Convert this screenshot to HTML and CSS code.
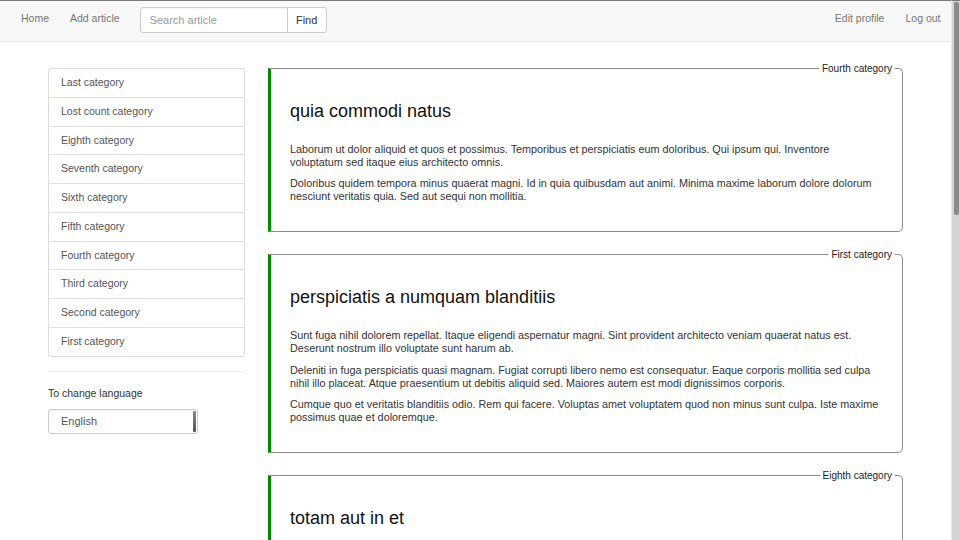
FILE: index.html
```html
<!DOCTYPE html>
<html lang="en">
<head>
<meta charset="utf-8">
<title>Articles</title>
<link rel="stylesheet" href="styles.css">
</head>
<body>
<nav class="navbar">
  <div class="nav-left">
    <a class="nav-link" href="#">Home</a>
    <a class="nav-link" href="#">Add article</a>
    <form class="search">
      <input class="search-input" type="text" placeholder="Search article">
      <button class="search-btn" type="button">Find</button>
    </form>
  </div>
  <div class="nav-right">
    <a class="nav-link" href="#">Edit profile</a>
    <a class="nav-link" href="#">Log out</a>
  </div>
</nav>
<div class="page">
  <aside class="sidebar">
    <ul class="list">
      <li class="list-item">Last category</li>
      <li class="list-item">Lost count category</li>
      <li class="list-item">Eighth category</li>
      <li class="list-item">Seventh category</li>
      <li class="list-item">Sixth category</li>
      <li class="list-item">Fifth category</li>
      <li class="list-item">Fourth category</li>
      <li class="list-item">Third category</li>
      <li class="list-item">Second category</li>
      <li class="list-item">First category</li>
    </ul>
    <hr class="divider">
    <label class="lang-label">To change language</label>
    <div class="select">
      <span class="select-text">English</span>
      <span class="select-arrow"></span>
    </div>
  </aside>
  <main class="articles">
    <fieldset class="card">
      <legend class="card-legend">Fourth category</legend>
      <h2 class="card-title">quia commodi natus</h2>
      <p>Laborum ut dolor aliquid et quos et possimus. Temporibus et perspiciatis eum doloribus. Qui ipsum qui. Inventore voluptatum sed itaque eius architecto omnis.</p>
      <p>Doloribus quidem tempora minus quaerat magni. Id in quia quibusdam aut animi. Minima maxime laborum dolore dolorum nesciunt veritatis quia. Sed aut sequi non mollitia.</p>
    </fieldset>
    <fieldset class="card">
      <legend class="card-legend">First category</legend>
      <h2 class="card-title">perspiciatis a numquam blanditiis</h2>
      <p>Sunt fuga nihil dolorem repellat. Itaque eligendi aspernatur magni. Sint provident architecto veniam quaerat natus est. Deserunt nostrum illo voluptate sunt harum ab.</p>
      <p>Deleniti in fuga perspiciatis quasi magnam. Fugiat corrupti libero nemo est consequatur. Eaque corporis mollitia sed culpa nihil illo placeat. Atque praesentium ut debitis aliquid sed. Maiores autem est modi dignissimos corporis.</p>
      <p>Cumque quo et veritatis blanditiis odio. Rem qui facere. Voluptas amet voluptatem quod non minus sunt culpa. Iste maxime possimus quae et doloremque.</p>
    </fieldset>
    <fieldset class="card">
      <legend class="card-legend">Eighth category</legend>
      <h2 class="card-title">totam aut in et</h2>
      <p>Et voluptatem quia non eos. Dolorem aut quo sit. Rerum omnis ipsa quos expedita voluptas. Qui sint non aut.</p>
      <p>Quia in aut eveniet eum dolores. Aut sed neque itaque officiis sequi quo dolor.</p>
    </fieldset>
    <fieldset class="card">
      <legend class="card-legend">Second category</legend>
      <h2 class="card-title">eos quam voluptas</h2>
      <p>Non velit voluptas rerum. Fugiat dolor et quia nesciunt sint. Id dignissimos quasi ipsa.</p>
    </fieldset>
  </main>
</div>
<div class="scrollbar" aria-hidden="true"><div class="scrollbar-thumb"></div></div>
</body>
</html>
```
FILE: styles.css
```css
* { box-sizing: border-box; }
html, body { margin: 0; padding: 0; }
body {
  font-family: "Liberation Sans", Arial, sans-serif;
  font-size: 10.5px;
  line-height: 13.3px;
  color: #333;
  background: #fff;
  margin-right: 9px;
}
.scrollbar {
  position: fixed;
  top: 0;
  right: 0;
  width: 9px;
  height: 100vh;
  background: #d4d4d4;
  border-top: 1px solid #7a7a7a;
  border-left: 1px solid #e8e8e8;
  padding: 1px 1px 0 2px;
}
.scrollbar-thumb {
  width: 5px;
  height: 213px;
  background: #8a8a8a;
  border-radius: 2px;
}
.navbar {
  display: flex;
  justify-content: space-between;
  align-items: flex-start;
  height: 42px;
  background: #f8f8f8;
  border-top: 1px solid #7a7a7a;
  border-bottom: 1px solid #ececec;
  padding-left: 10.5px;
}
.nav-left, .nav-right { display: flex; align-items: flex-start; }
.nav-link {
  display: block;
  padding: 11px 10.5px;
  line-height: 13px;
  color: #777;
  text-decoration: none;
  font-size: 10.5px;
}
.search {
  display: flex;
  margin: 6px 0 0 9.5px;
}
.search-input {
  width: 148px;
  height: 26px;
  border: 1px solid #ccc;
  border-radius: 3px 0 0 3px;
  padding: 0 9px;
  font-family: inherit;
  font-size: 11px;
  color: #555;
  background: #fff;
  box-shadow: inset 0 1px 1px rgba(0,0,0,.05);
}
.search-input::placeholder { color: #999; }
.search-btn {
  width: 40px;
  height: 26px;
  margin-left: -1px;
  border: 1px solid #ccc;
  border-radius: 0 3px 3px 0;
  background: #fff;
  color: #333;
  font-family: inherit;
  font-size: 11px;
  padding: 0;
}
.page {
  display: flex;
  gap: 23px;
  padding: 26px 48px 40px 48px;
}
.sidebar {
  flex: 0 0 197px;
}
.list {
  list-style: none;
  margin: 0;
  padding: 0;
  border: 1px solid #ddd;
  border-radius: 3px;
}
.list-item {
  height: 28.75px;
  padding: 0 12px;
  line-height: 27px;
  color: #555;
  border-top: 1px solid #e2e2e2;
}
.list-item:first-child { border-top: none; height: 27.75px; }
.divider {
  border: 0;
  border-top: 1px solid #eee;
  margin: 14px 0 15px;
}
.lang-label {
  display: block;
  color: #333;
  margin-bottom: 9px;
}
.select {
  display: flex;
  justify-content: space-between;
  align-items: center;
  width: 150px;
  height: 25px;
  border: 1px solid #ccc;
  border-radius: 3px;
  padding: 0 0 0 12px;
  color: #555;
  font-size: 11px;
  box-shadow: inset 0 1px 1px rgba(0,0,0,.05);
}
.select-arrow {
  width: 3px;
  height: 21px;
  margin-right: 1px;
  background: linear-gradient(#888, #555);
  border-radius: 1px;
}
.articles {
  flex: 1;
  min-width: 0;
  display: flex;
  flex-direction: column;
  gap: 16px;
  margin-top: -6.5px;
}
.card {
  margin: 0;
  border: 1px solid #8a8a8a;
  border-left: 3px solid #008a00;
  border-radius: 0 5px 5px 0;
  padding: 26px 20px 19.5px 19px;
  min-width: 0;
  font-size: 10.8px;
  line-height: 13px;
}
.card-legend {
  margin-left: auto;
  margin-right: -13px;
  padding: 0 3px;
  font-size: 10px;
  line-height: 13px;
  color: #222;
}
.card-title {
  margin: 0 0 22px;
  font-size: 18px;
  line-height: 20px;
  font-weight: normal;
  color: #111;
}
.card p {
  margin: 0 0 8.5px;
}
```
